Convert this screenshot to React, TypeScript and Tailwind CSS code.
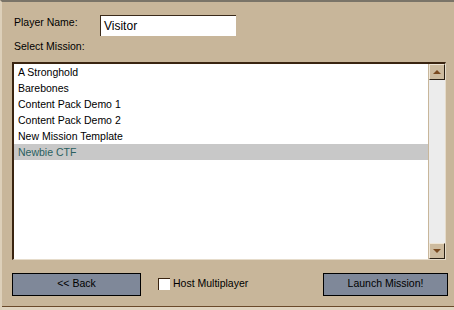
import React from "react";

const items = [
  "A Stronghold",
  "Barebones",
  "Content Pack Demo 1",
  "Content Pack Demo 2",
  "New Mission Template",
  "Newbie CTF",
];

export default function App() {
  return (
    <div
      className="w-[454px] h-[310px] bg-[#c8b69a] relative overflow-hidden text-[10.5px] text-black"
      style={{ fontFamily: '"Liberation Sans", Arial, sans-serif' }}
    >
      <div className="flex flex-col h-full border-t-2 border-t-[#7a7468] border-l-2 border-l-[#ddd0ba]">
        <div className="flex-1 flex flex-col pl-[10px] pr-[6px]">
          <div className="flex items-center h-[20px] mt-[13px]">
            <span className="w-[88px] pl-[2px] -mt-[4px]">Player Name:</span>
            <div className="w-[136px] h-[21px] bg-white border-t border-l border-[#3a2a1a] border-r-[#e8e0d0] border-b-[#e8e0d0] flex items-center pl-[3px] text-[12px]">
              Visitor
            </div>
          </div>
          <div className="pl-[2px] mt-[4px] h-[20px]">Select Mission:</div>
          <div className="mt-[3px] w-[434px] h-[198px] bg-white border-t-2 border-l-2 border-t-[#3a2410] border-l-[#3a2410] border-r border-b border-r-[#e6dccb] border-b-[#e6dccb] flex">
            <div className="flex-1 flex flex-col">
              {items.map((it, i) => (
                <div
                  key={it}
                  className={
                    "h-[16px] leading-[16px] pl-[4px] " +
                    (i === 5 ? "bg-[#c8c8c8] text-[#2a6060]" : "")
                  }
                >
                  {it}
                </div>
              ))}
            </div>
            <div className="w-[17px] bg-[#ececec] flex flex-col justify-between border-l border-[#c8b69a]">
              <div className="h-[16px] bg-[#cdbb9f] border-t border-l border-[#efe6d6] border-r border-b border-r-[#2a2015] border-b-[#2a2015] flex items-center justify-center">
                <svg width="8" height="4" viewBox="0 0 8 4">
                  <polygon points="0,4 8,4 4,0" fill="#7a4a20" />
                </svg>
              </div>
              <div className="h-[16px] bg-[#cdbb9f] border-t border-l border-[#efe6d6] border-r border-b border-r-[#2a2015] border-b-[#2a2015] flex items-center justify-center">
                <svg width="8" height="4" viewBox="0 0 8 4">
                  <polygon points="0,0 8,0 4,4" fill="#7a4a20" />
                </svg>
              </div>
            </div>
          </div>
          <div className="flex items-center mt-[12px] h-[24px]">
            <div className="w-[129px] h-[23px] bg-[#7f8899] border border-black flex items-center justify-center">
              {"<< Back"}
            </div>
            <div className="ml-[17px] w-[12px] h-[12px] bg-white border-t border-l border-[#3a2410] border-r-[#efe6d6] border-b-[#efe6d6]" />
            <span className="ml-[3px]">Host Multiplayer</span>
            <div className="ml-auto w-[125px] h-[23px] bg-[#7f8899] border border-black flex items-center justify-center">
              Launch Mission!
            </div>
          </div>
        </div>
        <div className="h-[4px] border-t border-[#6a4a2a] bg-[#e0d4c0]" />
      </div>
    </div>
  );
}
